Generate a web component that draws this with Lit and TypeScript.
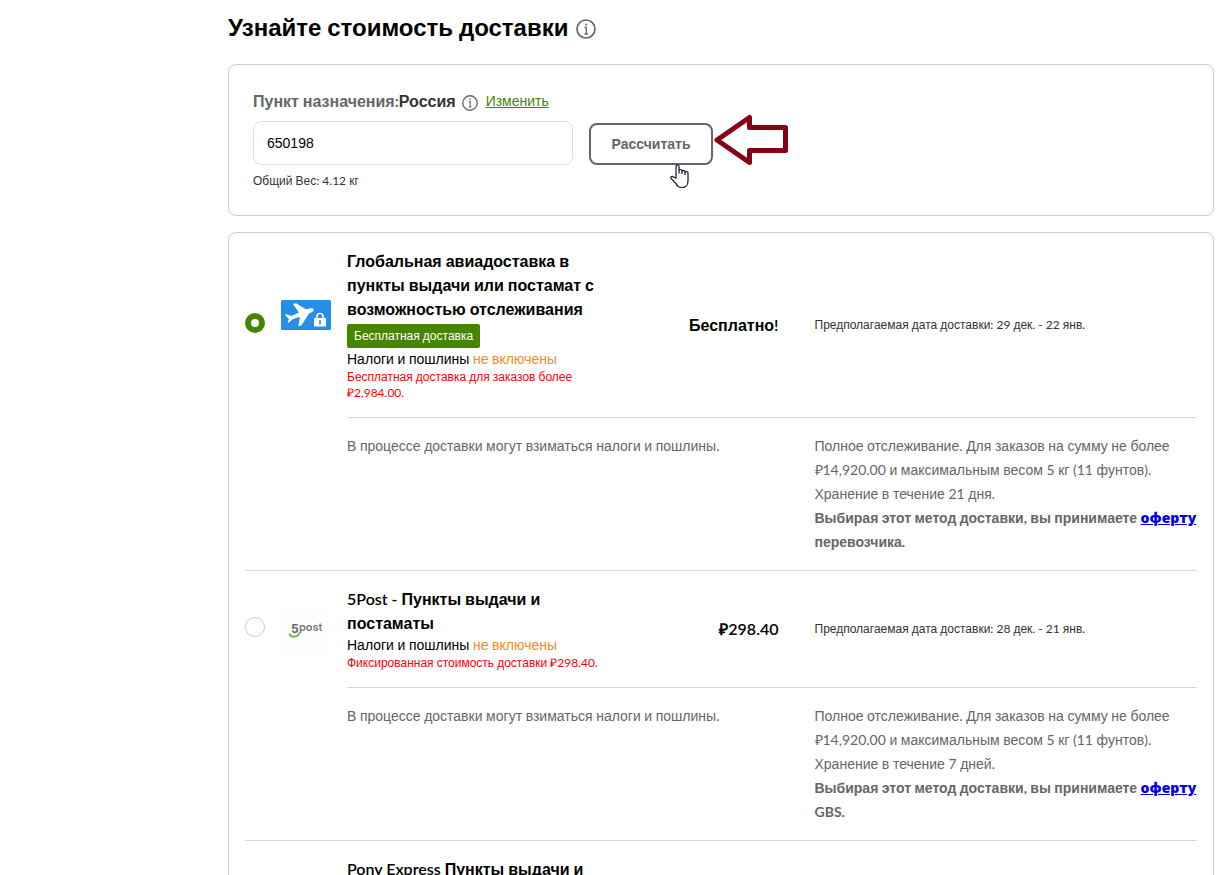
import { LitElement, html, css } from "lit";
import { customElement, property } from "lit/decorators.js";

interface ShippingMethod {
  id: string;
  logo: "plane" | "fivepost" | "none";
  title: string;
  badge?: string;
  promo: string;
  price: string;
  dates: string;
  storage: string;
  carrier: string;
}

const METHODS: ShippingMethod[] = [
  {
    id: "global-air",
    logo: "plane",
    title: "Глобальная авиадоставка в пункты выдачи или постамат с возможностью отслеживания",
    badge: "Бесплатная доставка",
    promo: "Бесплатная доставка для заказов более ₽2,984.00.",
    price: "Бесплатно!",
    dates: "29 дек. - 22 янв.",
    storage: "21 дня.",
    carrier: "перевозчика.",
  },
  {
    id: "fivepost",
    logo: "fivepost",
    title: "5Post - Пункты выдачи и постаматы",
    promo: "Фиксированная стоимость доставки ₽298.40.",
    price: "₽298.40",
    dates: "28 дек. - 21 янв.",
    storage: "7 дней.",
    carrier: "GBS.",
  },
  {
    id: "pony",
    logo: "none",
    title: "Pony Express Пункты выдачи и постаматы",
    promo: "Фиксированная стоимость доставки ₽298.40.",
    price: "₽298.40",
    dates: "28 дек. - 21 янв.",
    storage: "7 дней.",
    carrier: "GBS.",
  },
];

/* Cyrillic words are set in the sans face; figures, Latin and spaces stay in Lato. */
const mixed = (text: string) =>
  text
    .split(/([\u0400-\u04ff]+)/)
    .map((part, i) => (i % 2 ? html`<span class="cyr">${part}</span>` : part));

const shared = css`
  * {
    box-sizing: border-box;
  }
  .cyr {
    font-family: "Liberation Sans", Arial, sans-serif;
    line-height: 1;
  }
`;

@customElement("info-icon")
class InfoIcon extends LitElement {
  @property({ type: Number }) size = 16;

  static styles = css`
    :host {
      display: inline-flex;
      color: #666;
    }
  `;

  render() {
    return html`<svg width=${this.size} height=${this.size} viewBox="0 0 20 20" fill="none" stroke="currentColor">
      <circle cx="10" cy="10" r="9" stroke-width="1.7"></circle>
      <path d="M8.5 8.3h1.800v6.500M8.500 15h3.400" stroke-width="1.300"></path>
      <circle cx="10.200" cy="5.500" r="1" fill="currentColor" stroke="none"></circle>
    </svg>`;
  }
}

@customElement("shipping-row")
class ShippingRow extends LitElement {
  @property({ attribute: false }) method!: ShippingMethod;
  @property({ type: Boolean }) selected = false;

  static styles = [
    shared,
    css`
      :host {
        display: block;
        border-bottom: 1px solid #d8d8d8;
        padding: 16px 0;
      }
      .row {
        display: grid;
        grid-template-columns: 20px 50px minmax(0, 1fr);
        column-gap: 16px;
      }
      .summary {
        display: grid;
        grid-template-columns: 30% 1fr 45%;
        align-items: center;
      }
      .radio {
        align-self: center;
        appearance: none;
        width: 20px;
        height: 20px;
        margin: 0 0 4px;
        border: 1px solid #ccc;
        border-radius: 50%;
        background: #fff;
      }
      .radio:checked {
        border: 6px solid #458500;
      }
      .logo {
        align-self: center;
        width: 50px;
        height: 50px;
      }
      .title {
        display: block;
        font-size: 16px;
        line-height: 24px;
        font-weight: 600;
        color: #000;
      }
      .badge {
        display: block;
        width: fit-content;
        margin: 3px 0 1px;
        padding: 0 7px;
        border-radius: 2px;
        background: #458500;
        color: #fff;
        font-size: 12px;
        line-height: 24px;
      }
      .taxes {
        font-size: 14px;
        line-height: 20px;
        color: #000;
      }
      .not-included {
        color: #f68b1e;
      }
      .promo {
        font-size: 12px;
        line-height: 16px;
        color: #f00;
      }
      .price {
        padding-right: 36px;
        font-size: 16px;
        line-height: 24px;
        font-weight: 600;
        color: #000;
        text-align: right;
      }
      .dates {
        font-size: 12px;
        line-height: 16px;
        color: #333;
      }
      .details {
        grid-column: 3;
        display: grid;
        grid-template-columns: 55% 45%;
        margin-top: 16px;
        padding-top: 16px;
        border-top: 1px solid #d8d8d8;
        font-size: 14px;
        line-height: 24px;
        color: #666;
      }
      .details p {
        margin: 0;
      }
      .terms {
        font-weight: 700;
      }
      .offer {
        font-family: "Open Sans", "Noto Sans", sans-serif;
        font-weight: 800;
        line-height: 1;
        color: #00e;
      }
      .mark-five {
        font: 700 12px Inter, sans-serif;
        fill: #666;
      }
      .mark-post {
        font: 600 11px Inter, sans-serif;
        fill: #777;
      }
    `,
  ];

  private logo() {
    if (this.method.logo === "plane") {
      return html`<svg class="logo" viewBox="0 0 50 50" aria-hidden="true">
        <rect width="50" height="30" rx="1.5" fill="#268ee6"></rect>
        <path
          d="M12 4l3-.8L25 9.300l5-1.100c2-.3 3.200.7 2.800 1.900-.5 1.500-2.500 2.500-5 3.600L20.500 25.300l-3.200 1L19 16.700l-7 2.300-4 3.600-1.600.2L8 19.200 4 14.700l1.500-.5L10.500 16l7.500-3.500z"
          fill="#fff"
        ></path>
        <rect x="33" y="18" width="12" height="8.500" rx=".6" fill="#fff"></rect>
        <path d="M36 18v-1.500a3 3 0 0 1 6 0V18" fill="none" stroke="#fff" stroke-width="1.500"></path>
        <path d="M39 20v4.500" stroke="#268ee6" stroke-width="1.500"></path>
      </svg>`;
    }
    if (this.method.logo === "fivepost") {
      return html`<svg class="logo" viewBox="0 0 50 50" aria-hidden="true">
        <rect width="50" height="50" fill="#fefefe"></rect>
        <text class="mark-five" x="10" y="29">5</text>
        <text class="mark-post" x="18" y="27">post</text>
        <path d="M8.500 29.500c1 4.500 8.500 4.500 10-1" fill="none" stroke="#5fc24a" stroke-width="1.800"></path>
      </svg>`;
    }
    return html`<span class="logo"></span>`;
  }

  render() {
    const m = this.method;
    return html`
      <div class="row">
        <input class="radio" id="method" type="radio" .checked=${this.selected} />
        ${this.logo()}
        <div class="summary">
          <div>
            <label class="title" for="method">${mixed(m.title)}</label>
            ${m.badge ? html`<span class="badge">${mixed(m.badge)}</span>` : ""}
            <div class="taxes">
              ${mixed("Налоги и пошлины ")}<span class="not-included">${mixed("не включены")}</span>
            </div>
            <div class="promo">${mixed(m.promo)}</div>
          </div>
          <div class="price">${mixed(m.price)}</div>
          <div class="dates">${mixed("Предполагаемая дата доставки: " + m.dates)}</div>
        </div>
        <div class="details">
          <p>${mixed("В процессе доставки могут взиматься налоги и пошлины.")}</p>
          <div>
            <p>
              ${mixed("Полное отслеживание. Для заказов на сумму не более ₽14,920.00 и максимальным весом 5 кг (11 фунтов).")}
            </p>
            <p>${mixed("Хранение в течение " + m.storage)}</p>
            <p class="terms">
              ${mixed("Выбирая этот метод доставки, вы принимаете ")}<a class="offer" href="#offer">оферту</a>
              ${mixed(m.carrier)}
            </p>
          </div>
        </div>
      </div>
    `;
  }
}

@customElement("app-root")
class AppRoot extends LitElement {
  static styles = [
    shared,
    css`
      :host {
        display: block;
        height: 100vh;
        overflow: hidden;
        background: #fff;
        font-family: Lato, "Liberation Sans", sans-serif;
        color: #333;
      }
      .page {
        margin: 0 12px 0 228px;
        padding-top: 12px;
      }
      .heading {
        display: flex;
        align-items: center;
        gap: 8px;
        margin-bottom: 22px;
      }
      .heading-icon {
        margin-top: 4px;
      }
      h1 {
        margin: 0;
        font-size: 24px;
        line-height: 30px;
        font-weight: 700;
        color: #000;
      }
      .card {
        border: 1px solid #ccc;
        border-radius: 8px;
      }
      .calc {
        padding: 24px 24px 26px;
        margin-bottom: 16px;
      }
      .destination {
        display: flex;
        align-items: center;
        font-size: 16px;
        line-height: 24px;
        font-weight: 700;
        margin-bottom: 8px;
      }
      .caption {
        color: #666;
      }
      .dest-icon {
        margin: 4px 8px 0 6px;
      }
      .change {
        font-size: 14px;
        font-weight: 400;
        color: #458500;
      }
      .fields {
        display: flex;
        align-items: flex-end;
        gap: 16px;
      }
      .postcode {
        width: 320px;
        height: 44px;
        padding: 0 13px;
        border: 1px solid #ddd;
        border-radius: 8px;
        font: 14px "Liberation Sans", Arial, sans-serif;
        color: #000;
      }
      .action {
        position: relative;
      }
      .calculate {
        display: block;
        min-width: 124px;
        height: 42px;
        padding: 0 20px;
        border: 2px solid #666;
        border-radius: 8px;
        background: #fff;
        color: #666;
        font: 700 14px "Liberation Sans", Arial, sans-serif;
      }
      .pointer {
        position: absolute;
        top: 41px;
        left: 81px;
      }
      .arrow {
        position: absolute;
        top: -9px;
        left: 124px;
      }
      .weight {
        margin-top: 8px;
        font-size: 12px;
        line-height: 16px;
      }
      .methods {
        padding: 0 16px;
      }
    `,
  ];

  render() {
    return html`
      <main class="page">
        <div class="heading">
          <h1>${mixed("Узнайте стоимость доставки")}</h1>
          <info-icon class="heading-icon" .size=${20}></info-icon>
        </div>
        <form class="card calc">
          <div class="destination">
            <label class="caption" for="postcode">${mixed("Пункт назначения:")}</label>
            <span>${mixed("Россия")}</span>
            <info-icon class="dest-icon"></info-icon>
            <a class="change" href="#change">${mixed("Изменить")}</a>
          </div>
          <div class="fields">
            <input class="postcode" id="postcode" type="text" value="650198" />
            <div class="action">
              <button class="calculate" type="button">Рассчитать</button>
              <svg class="arrow" width="76" height="52" viewBox="0 0 76 52" fill="#fff" stroke="#880015" stroke-width="5" stroke-linejoin="round" aria-hidden="true">
                <path d="M4 26L36.500 3.500v10h36v23h-36v12z"></path>
              </svg>
              <svg class="pointer" width="20" height="25" viewBox="0 0 20 25" fill="#fff" stroke="#112" stroke-width="1.200" aria-hidden="true">
                <path d="M6 14V2.500a1.500 1.500 0 0 1 3 0V9.500V7a1.500 1.500 0 0 1 3 0v3V7.800a1.500 1.500 0 0 1 3 0V11V9a1.500 1.500 0 0 1 3 0v8c0 4-2.500 6.500-6 6.500-3 0-5-1.500-6-4L1 14.500c-.8-1.800 1-3 2.500-1.500z"></path>
              </svg>
            </div>
          </div>
          <div class="weight">${mixed("Общий Вес: 4.12 кг")}</div>
        </form>
        <section class="card methods">
          ${METHODS.map(
            (m, i) => html`<shipping-row .method=${m} .selected=${i === 0}></shipping-row>`
          )}
        </section>
      </main>
    `;
  }
}
